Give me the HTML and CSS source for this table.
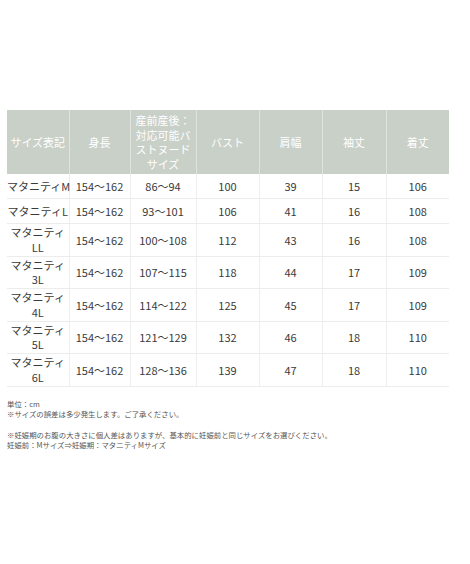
FILE: index.html
```html
<!DOCTYPE html>
<html lang="ja">
<head>
<meta charset="utf-8">
<link rel="stylesheet" href="styles.css">
</head>
<body>
<div class="page">
  <table class="size-table">
    <colgroup>
      <col class="c1"><col class="c2"><col class="c3"><col class="c4"><col class="c5"><col class="c6"><col class="c7">
    </colgroup>
    <thead>
      <tr>
        <th>サイズ表記</th>
        <th>身長</th>
        <th>産前産後：<br>対応可能バ<br>ストヌード<br>サイズ</th>
        <th>バスト</th>
        <th>肩幅</th>
        <th>袖丈</th>
        <th>着丈</th>
      </tr>
    </thead>
    <tbody>
      <tr class="one"><td>マタニティM</td><td>154～162</td><td>86～94</td><td>100</td><td>39</td><td>15</td><td>106</td></tr>
      <tr class="one"><td>マタニティL</td><td>154～162</td><td>93～101</td><td>106</td><td>41</td><td>16</td><td>108</td></tr>
      <tr class="two"><td>マタニティ<br>LL</td><td>154～162</td><td>100～108</td><td>112</td><td>43</td><td>16</td><td>108</td></tr>
      <tr class="two"><td>マタニティ<br>3L</td><td>154～162</td><td>107～115</td><td>118</td><td>44</td><td>17</td><td>109</td></tr>
      <tr class="two"><td>マタニティ<br>4L</td><td>154～162</td><td>114～122</td><td>125</td><td>45</td><td>17</td><td>109</td></tr>
      <tr class="two"><td>マタニティ<br>5L</td><td>154～162</td><td>121～129</td><td>132</td><td>46</td><td>18</td><td>110</td></tr>
      <tr class="two"><td>マタニティ<br>6L</td><td>154～162</td><td>128～136</td><td>139</td><td>47</td><td>18</td><td>110</td></tr>
    </tbody>
  </table>
  <div class="notes">
    <p>単位：cm<br>※サイズの誤差は多少発生します。ご了承ください。</p>
    <p>※妊娠期のお腹の大きさに個人差はありますが、基本的に妊娠前と同じサイズをお選びください。<br>妊娠前：Mサイズ⇒妊娠期：マタニティMサイズ</p>
  </div>
</div>
</body>
</html>
```
FILE: styles.css
```css
html, body {
  margin: 0;
  padding: 0;
  background: #ffffff;
}
body {
  font-family: "Noto Sans CJK JP", "DejaVu Sans", sans-serif;
  color: #333333;
}
.page {
  padding: 110px 0 0 7px;
}
.size-table {
  width: 442px;
  border-collapse: collapse;
  table-layout: fixed;
  font-size: 11px;
  line-height: 14.5px;
}
.c1 { width: 62px; }
.c2 { width: 61px; }
.c3 { width: 66px; }
.c4 { width: 63px; }
.c5 { width: 63px; }
.c6 { width: 64px; }
.c7 { width: 63px; }
.size-table th {
  background: #c9d0c8;
  color: #ffffff;
  font-weight: normal;
  height: 64px;
  padding: 0;
  text-align: center;
  vertical-align: middle;
  border-left: 1px solid #dfe4de;
  white-space: nowrap;
}
.size-table th:first-child {
  border-left: none;
}
.size-table td {
  padding: 0;
  text-align: center;
  vertical-align: middle;
  white-space: nowrap;
  border-left: 1px solid #eeeeee;
  border-bottom: 1px solid #ececec;
  color: #3a3a3a;
}
.size-table td:first-child {
  border-left: none;
}
.size-table tr.one td {
  height: 24px;
}
.size-table tr.two td {
  height: 31.5px;
}
.notes {
  margin-top: 12px;
  font-size: 7.4px;
  line-height: 10px;
  color: #555555;
}
.notes p {
  margin: 0 0 11px 0;
}
```
